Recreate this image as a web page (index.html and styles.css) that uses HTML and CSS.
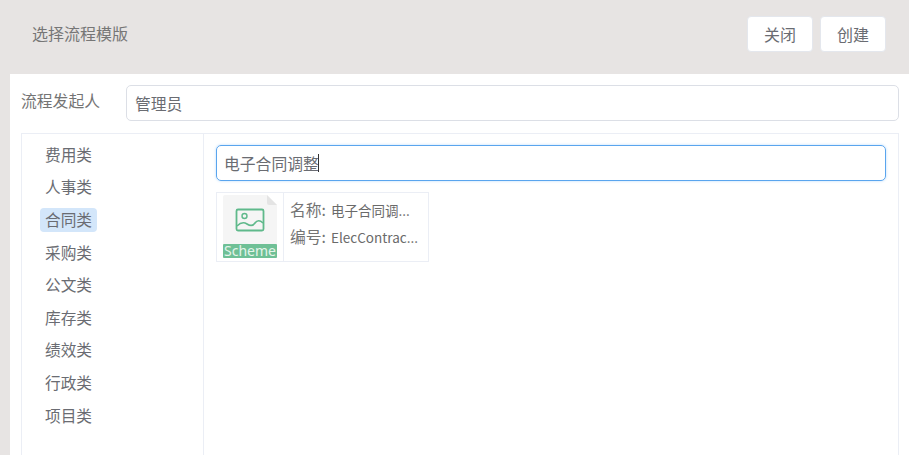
FILE: index.html
```html
<!DOCTYPE html>
<html lang="zh">
<head>
<meta charset="utf-8">
<title>选择流程模版</title>
<link rel="stylesheet" href="styles.css">
</head>
<body>
<header class="topbar">
  <div class="title">选择流程模版</div>
  <div class="actions">
    <button class="btn">关闭</button>
    <button class="btn">创建</button>
  </div>
</header>
<main class="sheet">
  <div class="form-row">
    <label class="form-label">流程发起人</label>
    <div class="field">管理员</div>
  </div>
  <section class="panel">
    <nav class="cats">
      <div class="cat"><span>费用类</span></div>
      <div class="cat"><span>人事类</span></div>
      <div class="cat"><span class="active">合同类</span></div>
      <div class="cat"><span>采购类</span></div>
      <div class="cat"><span>公文类</span></div>
      <div class="cat"><span>库存类</span></div>
      <div class="cat"><span>绩效类</span></div>
      <div class="cat"><span>行政类</span></div>
      <div class="cat"><span>项目类</span></div>
    </nav>
    <div class="content">
      <div class="search"><span>电子合同调整</span><i class="caret"></i></div>
      <article class="card">
        <div class="thumb">
          <div class="doc">
            <svg class="doc-bg" width="56" height="64" viewBox="0 0 56 64">
              <path d="M3 0H45L55 10V61a2 2 0 0 1-2 2H3a2 2 0 0 1-2-2V2a2 2 0 0 1 2-2Z" fill="#f5f5f5"/>
              <path d="M45 0L55 10H47a2 2 0 0 1-2-2Z" fill="#e4e4e4"/>
              <rect x="1" y="49" width="54" height="14" rx="1" fill="#6fc096"/>
              <rect x="14.500" y="14.500" width="27" height="21" rx="1.500" fill="none" stroke="#5fb98b" stroke-width="1.800"/>
              <circle cx="22.500" cy="21" r="2.500" fill="none" stroke="#5fb98b" stroke-width="1.400"/>
              <path d="M15 31c4-4 7-4 10-2s6 2 8-1 5-3 8 0" fill="none" stroke="#5fb98b" stroke-width="1.600"/>
            </svg>
            <span class="doc-tag">Scheme</span>
          </div>
        </div>
        <div class="meta">
          <div class="meta-row"><span class="meta-key">名称:</span><span class="meta-val">电子合同调...</span></div>
          <div class="meta-row"><span class="meta-key">编号:</span><span class="meta-val">ElecContrac...</span></div>
        </div>
      </article>
    </div>
  </section>
</main>
</body>
</html>
```

FILE: styles.css
```css
* { box-sizing: border-box; }
html, body { height: 100%; }
body {
  margin: 0;
  height: 455px;
  overflow: hidden;
  background: #e7e4e3;
  font-family: "Noto Sans CJK SC", "Liberation Sans", sans-serif;
  color: #606266;
}
.topbar {
  height: 74px;
  display: flex;
  align-items: flex-start;
  justify-content: space-between;
  padding: 16px 23px 0 32px;
}
.title { font-size: 16px; color: #767676; line-height: 34px; }
.actions { display: flex; gap: 7px; }
.btn {
  width: 66px;
  height: 36px;
  padding: 0;
  background: #fff;
  border: 1px solid #e4e7ed;
  border-radius: 4px;
  font: inherit;
  font-size: 16px;
  line-height: 32px;
  color: #6a6c72;
}
.sheet {
  margin-left: 10px;
  height: 381px;
  background: #fff;
  padding: 11px 10px 0 11px;
}
.form-row { display: flex; align-items: flex-start; height: 36px; }
.form-label { width: 105px; font-size: 15.800px; line-height: 32px; color: #747474; }
.field {
  flex: 1;
  height: 36px;
  border: 1px solid #dcdfe6;
  border-radius: 5px;
  padding: 0 8px;
  font-size: 15.800px;
  line-height: 35px;
  color: #6a6c72;
}
.panel {
  display: flex;
  margin-top: 12px;
  height: 340px;
  border: 1px solid #ebeef5;
}
.cats {
  width: 182px;
  flex: none;
  border-right: 1px solid #ebeef5;
  padding: 4.800px 0 0 18px;
}
.cat { height: 32.600px; line-height: 32px; font-size: 15.700px; color: #6a6c72; }
.cat span { display: inline-block; height: 24px; line-height: 23px; padding: 0 5px; border-radius: 4px; }
.cat span.active { background: #d3e6fa; }
.content { flex: 1; padding: 11px 12px 0 12px; }
.search {
  height: 36px;
  border: 1px solid #5aa5ee;
  border-radius: 5px;
  box-shadow: 0 0 3px #bcdcfb;
  padding: 0 7px;
  font-size: 15.800px;
  line-height: 33px;
  color: #6a6c72;
  display: flex;
  align-items: center;
}
.caret { width: 1px; height: 18px; background: #333; margin-left: -1px; }
.card {
  display: flex;
  width: 213px;
  height: 70px;
  margin-top: 11px;
  border: 1px solid #ebeef5;
}
.thumb {
  width: 67px;
  flex: none;
  border-right: 1px solid #ebeef5;
  padding: 2px 0 0 5px;
}
.doc { position: relative; width: 56px; height: 64px; }
.doc-bg { display: block; }
.doc-tag {
  position: absolute;
  left: 1px;
  right: 1px;
  bottom: 1px;
  height: 14px;
  font-family: "Noto Sans", "Liberation Sans", sans-serif;
  font-size: 14px;
  line-height: 14px;
  text-align: center;
  color: #e4f4ea;
}
.meta { padding: 3px 0 0 6px; min-width: 0; }
.meta-row { display: flex; align-items: center; height: 27px; white-space: nowrap; }
.meta-key { font-size: 15.800px; color: #747474; width: 41px; flex: none; }
.meta-val { font-size: 13.500px; color: #6a6a6a; }
```
